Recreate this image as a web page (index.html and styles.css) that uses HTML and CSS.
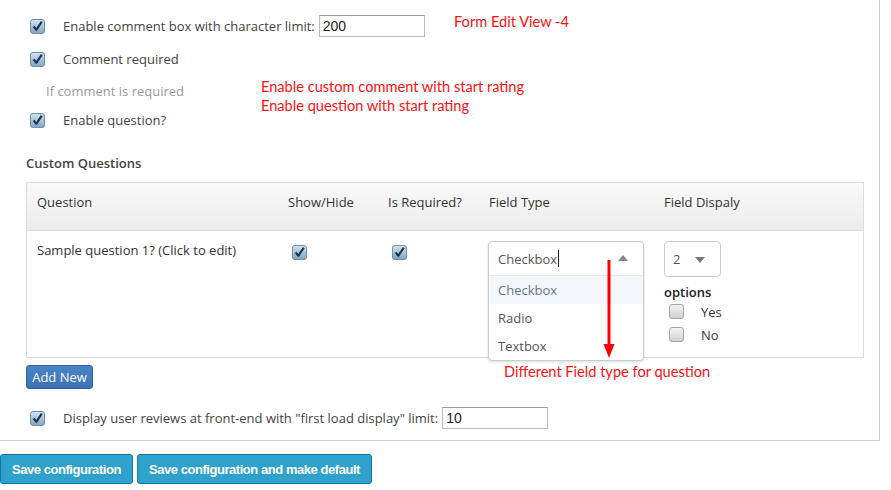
FILE: index.html
```html
<!DOCTYPE html>
<html>
<head>
<meta charset="utf-8">
<link rel="stylesheet" href="styles.css">
</head>
<body>
<svg class="defs" width="0" height="0">
  <defs>
    <linearGradient id="cbOn" x1="0" y1="0" x2="0" y2="1">
      <stop offset="0" stop-color="#d3e4f1"/>
      <stop offset="1" stop-color="#7ba5c5"/>
    </linearGradient>
    <linearGradient id="cbOff" x1="0" y1="0" x2="0" y2="1">
      <stop offset="0" stop-color="#f4f4f4"/>
      <stop offset="1" stop-color="#cfcfcf"/>
    </linearGradient>
    <symbol id="chk" viewBox="0 0 15 15">
      <rect x="0.5" y="0.5" width="14" height="14" rx="2.5" fill="url(#cbOn)" stroke="#6f8ea7"/>
      <path d="M3.6 7.4 L6.3 10.8 L11.8 2.6" fill="none" stroke="#1d344a" stroke-width="2.1" stroke-linejoin="round"/>
    </symbol>
    <symbol id="unchk" viewBox="0 0 15 15">
      <rect x="0.5" y="0.5" width="14" height="14" rx="2.5" fill="url(#cbOff)" stroke="#a6a6a6"/>
    </symbol>
  </defs>
</svg>

<div class="panel">
  <div class="opt-row">
    <svg class="cb"><use href="#chk"/></svg>
    <span class="label">Enable comment box with character limit:</span>
    <span class="textbox">200</span>
  </div>
  <div class="opt-row r2">
    <svg class="cb"><use href="#chk"/></svg>
    <span class="label">Comment required</span>
  </div>
  <div class="hint">If comment is required</div>
  <div class="opt-row r3">
    <svg class="cb"><use href="#chk"/></svg>
    <span class="label">Enable question?</span>
  </div>

  <h3 class="section-title">Custom Questions</h3>

  <div class="qtable">
    <div class="qhead">
      <div>Question</div>
      <div>Show/Hide</div>
      <div>Is Required?</div>
      <div>Field Type</div>
      <div>Field Dispaly</div>
    </div>
    <div class="qrow">
      <div class="qtext">Sample question 1? (Click to edit)</div>
      <div class="qcb"><svg class="cb"><use href="#chk"/></svg></div>
      <div class="qcb"><svg class="cb"><use href="#chk"/></svg></div>
      <div class="qtype">
        <div class="combo">
          <div class="combo-input"><span>Checkbox</span><span class="caret"></span><span class="tri-up"></span></div>
          <ul class="combo-list">
            <li class="active">Checkbox</li>
            <li>Radio</li>
            <li>Textbox</li>
          </ul>
        </div>
      </div>
      <div class="qdisplay">
        <div class="mini-select"><span>2</span><span class="tri-down"></span></div>
        <div class="opts-title">options</div>
        <div class="opt-item"><svg class="cb small"><use href="#unchk"/></svg><span>Yes</span></div>
        <div class="opt-item"><svg class="cb small"><use href="#unchk"/></svg><span>No</span></div>
      </div>
    </div>
  </div>

  <button class="add-btn">Add New</button>

  <div class="opt-row r4">
    <svg class="cb"><use href="#chk"/></svg>
    <span class="label">Display user reviews at front-end with "first load display" limit:</span>
    <span class="textbox">10</span>
  </div>

  <div class="note note-title">Form Edit View -4</div>
  <div class="note note-enable">Enable custom comment with start rating<br>Enable question with start rating</div>
  <div class="note note-field">Different Field type for question</div>
  <svg class="arrow" width="14" height="100" viewBox="0 0 14 100">
    <line x1="7" y1="0" x2="7" y2="86" stroke="#ff0000" stroke-width="3"/>
    <polygon points="1.5,84 12.5,84 7,98" fill="#ff0000"/>
  </svg>
</div>

<div class="actions">
  <button class="save-btn">Save configuration</button>
  <button class="save-btn">Save configuration and make default</button>
</div>
</body>
</html>
```

FILE: styles.css
```css
* { box-sizing: border-box; }

html, body {
  margin: 0;
  padding: 0;
  background: #ffffff;
}

body {
  font-family: "Open Sans", "Noto Sans", sans-serif;
  font-size: 13px;
  color: #444444;
  width: 891px;
  height: 490px;
  overflow: hidden;
}

.defs { position: absolute; }

.panel {
  position: relative;
  width: 880px;
  height: 441px;
  border-right: 1px solid #cccccc;
  border-bottom: 1px solid #cccccc;
  padding: 15px 0 0 26px;
}

.opt-row {
  display: flex;
  align-items: center;
  height: 22px;
  padding-left: 4px;
}

.opt-row.r2 { margin-top: 11px; }
.opt-row.r3 { margin-top: 7px; }
.opt-row.r4 { margin-top: 18px; }

.cb {
  width: 15px;
  height: 15px;
  flex: none;
  display: block;
}

.opt-row .cb { margin-right: 18px; }

.label { white-space: nowrap; }

.textbox {
  display: block;
  width: 106px;
  height: 22px;
  margin-left: 4px;
  border: 1px solid #bdbdbd;
  border-top-color: #9c9c9c;
  font-family: "Liberation Sans", Arial, sans-serif;
  font-size: 14px;
  line-height: 20px;
  padding: 0 3px;
  color: #222222;
}

.hint {
  margin-top: 10px;
  padding-left: 20px;
  height: 22px;
  line-height: 22px;
  color: #9a9a9a;
}

.section-title {
  margin: 22px 0 0 0;
  height: 20px;
  line-height: 20px;
  font-size: 13px;
  font-weight: 600;
  color: #444444;
}

.qtable {
  margin-top: 9px;
  width: 838px;
  border: 1px solid #dddddd;
}

.qhead, .qrow {
  display: grid;
  grid-template-columns: 251px 100px 101px 175px 1fr;
  padding-left: 10px;
}

.qhead {
  height: 48px;
  padding-top: 8px;
  line-height: 22px;
  background: linear-gradient(#f9f9f9, #ececec);
  border-bottom: 1px solid #dddddd;
  color: #333333;
}

.qrow {
  height: 126px;
  padding-top: 10px;
  color: #333333;
}

.qtext { line-height: 18px; }

.qcb { padding: 4px 0 0 4px; }

.qtype { position: relative; }

.combo {
  position: absolute;
  left: -1px;
  top: 0;
  width: 156px;
  border: 1px solid #cccccc;
  border-radius: 4px;
  background: #ffffff;
  box-shadow: 0 1px 3px rgba(0, 0, 0, 0.15);
  z-index: 2;
}

.combo-input {
  position: relative;
  display: flex;
  align-items: center;
  height: 34px;
  padding-left: 9px;
  border-bottom: 1px solid #e8e8e8;
  color: #555555;
}

.caret {
  display: block;
  width: 1px;
  height: 17px;
  background: #222222;
  margin-left: 1px;
}

.tri-up {
  position: absolute;
  right: 15px;
  top: 13px;
  width: 0;
  height: 0;
  border-left: 5px solid transparent;
  border-right: 5px solid transparent;
  border-bottom: 6px solid #888888;
}

.combo-list {
  list-style: none;
  margin: 0;
  padding: 0;
}

.combo-list li {
  height: 28px;
  line-height: 28px;
  padding-left: 9px;
  color: #555555;
}

.combo-list li.active {
  background: #f3f7fa;
  color: #6a7886;
}

.mini-select {
  position: relative;
  display: flex;
  align-items: center;
  width: 57px;
  height: 36px;
  border: 1px solid #cccccc;
  border-radius: 4px;
  padding-left: 8px;
  color: #555555;
}

.tri-down {
  position: absolute;
  left: 30px;
  top: 15px;
  width: 0;
  height: 0;
  border-left: 5px solid transparent;
  border-right: 5px solid transparent;
  border-top: 6px solid #777777;
}

.opts-title {
  margin-top: 7px;
  font-weight: 600;
  color: #222222;
  line-height: 16px;
}

.opt-item {
  display: flex;
  align-items: center;
  height: 23px;
  padding-left: 5px;
  color: #333333;
}

.opt-item .cb { margin-right: 17px; }

.add-btn {
  display: block;
  margin-top: 7px;
  width: 67px;
  height: 24px;
  padding: 0;
  border: 1px solid #2f62a3;
  border-radius: 3px;
  background: linear-gradient(#4a84c8, #3b72b5);
  color: #ffffff;
  font-family: "Open Sans", "Noto Sans", sans-serif;
  font-size: 13px;
}

.note {
  position: absolute;
  font-family: Lato, "Open Sans", sans-serif;
  font-size: 14.6px;
  color: #ff1010;
  line-height: 19px;
  white-space: nowrap;
}

.note-title { left: 454px; top: 12px; }
.note-enable { left: 261px; top: 77px; }
.note-field { left: 504px; top: 362px; }

.arrow {
  position: absolute;
  left: 602px;
  top: 260px;
  z-index: 5;
}

.actions {
  display: flex;
  gap: 4px;
  margin-top: 13px;
}

.save-btn {
  height: 30px;
  padding: 0 11px;
  border: 1px solid #0e79a8;
  border-radius: 3px;
  background: #2ea2cc;
  color: #ffffff;
  font-family: "Liberation Sans", Arial, sans-serif;
  font-size: 13px;
  font-weight: bold;
  letter-spacing: -0.45px;
}
```
